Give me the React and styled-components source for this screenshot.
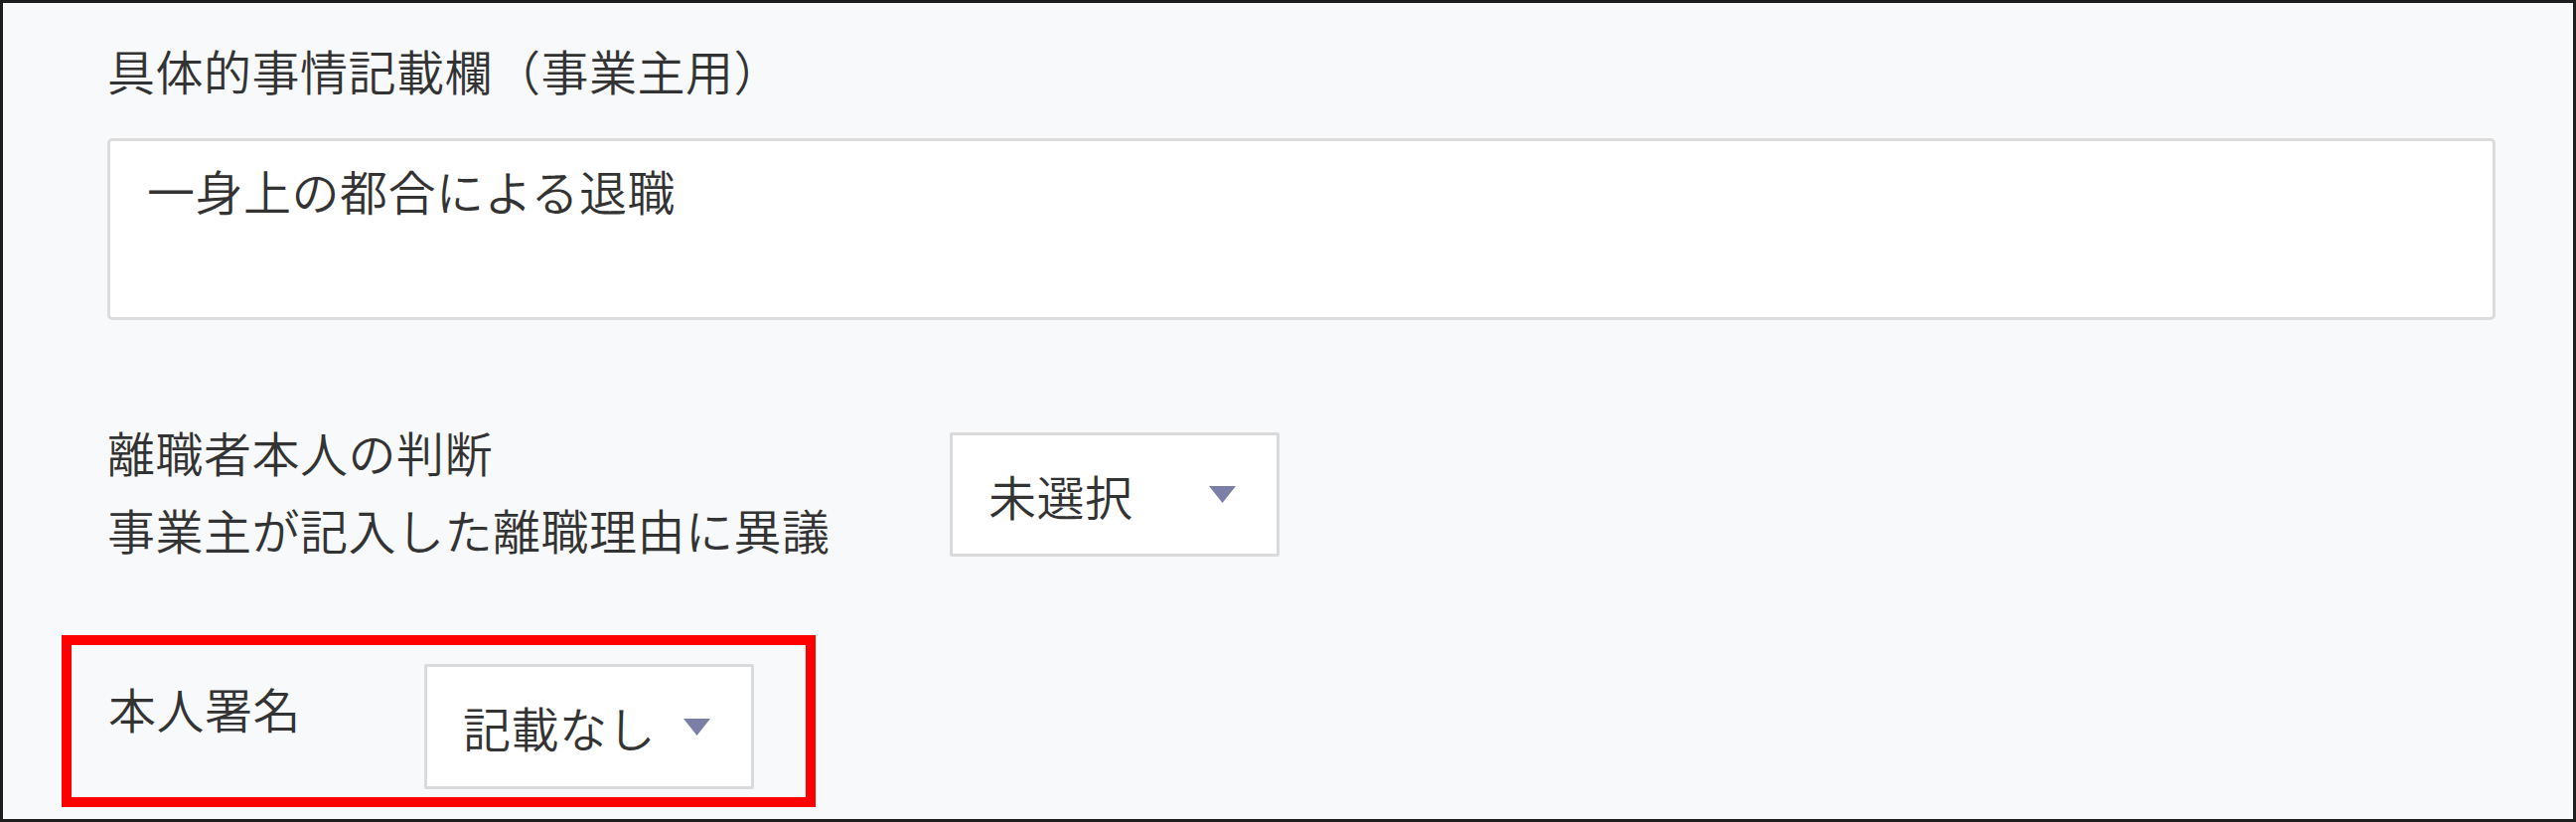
import React from "react";
import styled, { createGlobalStyle } from "styled-components";

const GlobalStyle = createGlobalStyle`
  html, body {
    margin: 0;
    padding: 0;
    background: #f8f9fb;
  }
  body {
    font-family: "Noto Sans CJK JP", "Noto Sans", sans-serif;
    color: #333333;
  }
`;

const Frame = styled.div`
  box-sizing: border-box;
  width: 2593px;
  height: 827px;
  border: 3px solid #1e1e1e;
  background: #f8f9fb;
  padding: 37px 78px 0 105px;
  font-size: 48px;
  font-weight: 350;
  letter-spacing: 0.5px;
`;

const FieldLabel = styled.div`
  line-height: 60px;
  white-space: nowrap;
`;

const TextBox = styled.div`
  box-sizing: border-box;
  margin-top: 39px;
  height: 183px;
  background: #ffffff;
  border: 3px solid #dcdcdc;
  border-radius: 5px;
  padding: 19px 37px;
  line-height: 60px;
`;

const Row = styled.div`
  display: flex;
  align-items: flex-start;
  margin-top: ${(p) => p.$gap}px;
`;

const RowLabel = styled.div`
  width: ${(p) => p.$width}px;
  flex-shrink: 0;
  line-height: ${(p) => p.$lineHeight}px;
  margin-top: ${(p) => p.$offset || 0}px;
  white-space: nowrap;
`;

const Select = styled.div`
  box-sizing: border-box;
  display: flex;
  align-items: center;
  justify-content: space-between;
  width: 332px;
  height: ${(p) => p.$height}px;
  margin-top: ${(p) => p.$offset || 0}px;
  padding: 0 40px 0 36px;
  background: #ffffff;
  border: 3px solid #dadada;
  border-radius: 2px;
  line-height: 60px;
`;

const Highlight = styled.div`
  box-sizing: border-box;
  width: 759px;
  height: 173px;
  margin: 68px 0 0 -46px;
  border: 10px solid #ff0000;
  padding: 19px 0 0 37px;
`;

const Caret = () => (
  <svg width="29" height="19" viewBox="0 0 29 19">
    <polygon points="1,1 28,1 14.5,18" fill="#7b7fa8" />
  </svg>
);

export default function App() {
  return (
    <>
      <GlobalStyle />
      <Frame>
        <FieldLabel>具体的事情記載欄（事業主用）</FieldLabel>
        <TextBox>一身上の都合による退職</TextBox>

        <Row $gap={93}>
          <RowLabel $width={848} $lineHeight={78}>
            離職者本人の判断
            <br />
            事業主が記入した離職理由に異議
          </RowLabel>
          <Select $height={125} $offset={20}>
            <span>未選択</span>
            <Caret />
          </Select>
        </Row>

        <Highlight>
          <Row $gap={0}>
            <RowLabel $width={318} $lineHeight={60} $offset={14}>
              本人署名
            </RowLabel>
            <Select $height={126}>
              <span>記載なし</span>
              <Caret />
            </Select>
          </Row>
        </Highlight>
      </Frame>
    </>
  );
}
